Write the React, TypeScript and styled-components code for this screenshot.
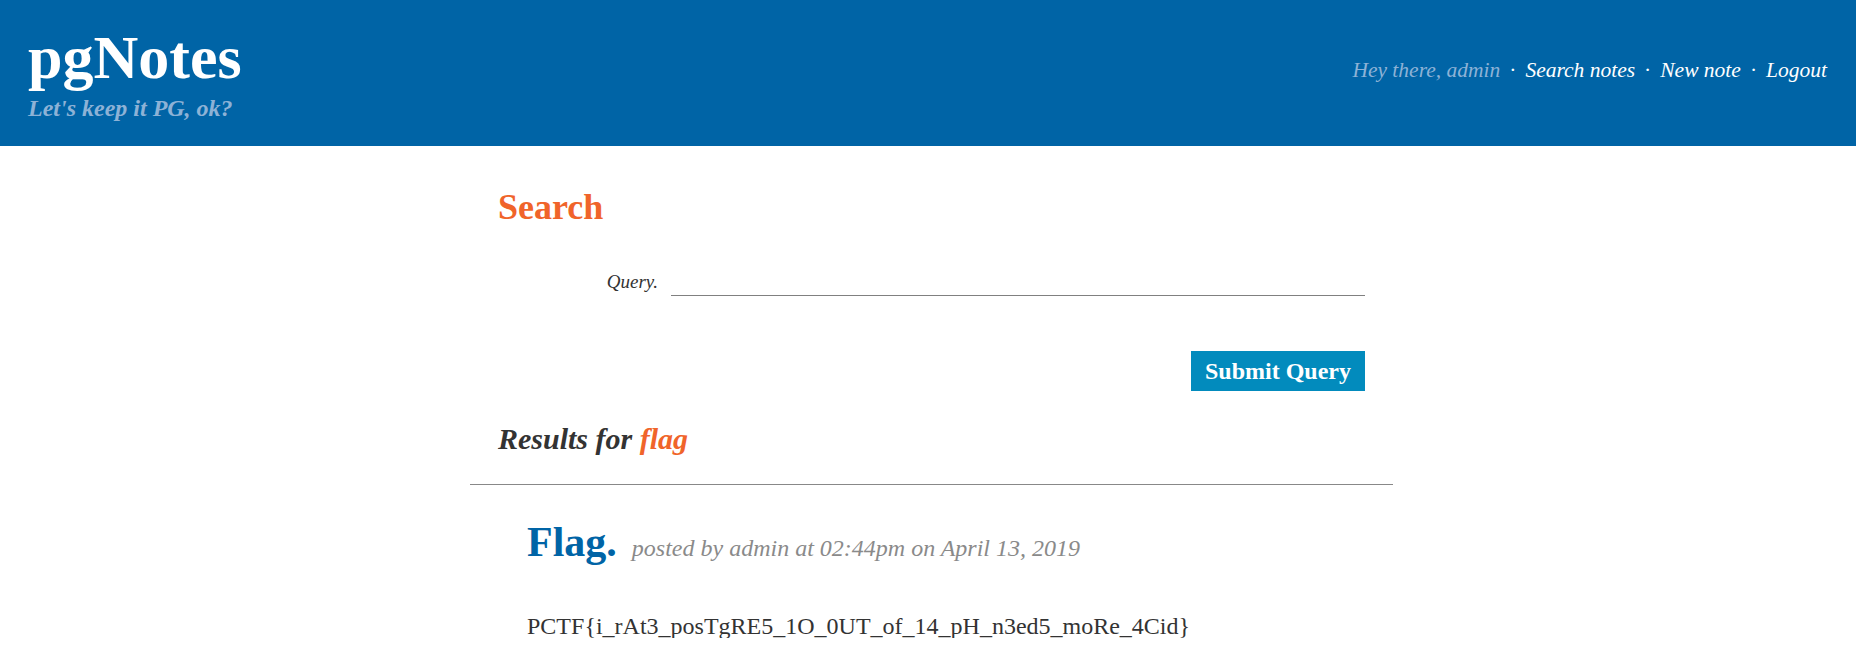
import styled, { createGlobalStyle } from 'styled-components'

const GlobalStyle = createGlobalStyle`
  html, body {
    margin: 0;
    padding: 0;
    background: #ffffff;
    font-family: "Liberation Serif", "Times New Roman", serif;
    color: #333333;
  }
`

const Header = styled.header({
  height: "146px",
  boxSizing: "border-box",
  background: "#0064a6",
  padding: "26px 29px 0 28px",
  display: "flex",
  justifyContent: "space-between",
  alignItems: "flex-start",
})

const Brand = styled.div({
  display: "flex",
  flexDirection: "column",
})

const Title = styled.h1({
  margin: 0,
  fontSize: "62px",
  lineHeight: 1,
  fontWeight: 700,
  color: "#ffffff",
})

const Tagline = styled.div({
  marginTop: "8px",
  fontSize: "24px",
  lineHeight: 1,
  fontWeight: 700,
  fontStyle: "italic",
  color: "#8db2d6",
})

const Nav = styled.nav({
  paddingTop: "34px",
  display: "flex",
  alignItems: "baseline",
  gap: "9px",
  fontSize: "21.5px",
  lineHeight: 1,
  fontStyle: "italic",
})

const Greeting = styled.span({
  color: "#8db2d6",
})

const NavLink = styled.a({
  color: "#ffffff",
  textDecoration: "none",
  cursor: "pointer",
})

const Dot = styled.span({
  color: "#ffffff",
  fontStyle: "normal",
})

const Main = styled.main({
  width: "923px",
  marginLeft: "calc(50% - 458px)",
})

const SearchSection = styled.section({
  padding: "0 28px",
  display: "flex",
  flexDirection: "column",
})

const Heading = styled.h2({
  margin: "43px 0 0",
  fontSize: "36px",
  lineHeight: 1,
  fontWeight: 700,
  color: "#f0642a",
})

const Form = styled.form({
  display: "flex",
  flexDirection: "column",
})

const Field = styled.div({
  marginTop: "43px",
  display: "grid",
  gridTemplateColumns: "160px 1fr",
  columnGap: "13px",
  alignItems: "end",
})

const Label = styled.label({
  textAlign: "right",
  fontSize: "19px",
  lineHeight: 1,
  fontStyle: "italic",
  color: "#333333",
  marginBottom: "5px",
})

const Input = styled.input({
  height: "28px",
  boxSizing: "border-box",
  border: "none",
  borderBottom: "1px solid #808080",
  outline: "none",
  background: "transparent",
  fontFamily: "inherit",
  fontSize: "20px",
})

const Submit = styled.button({
  alignSelf: "flex-end",
  marginTop: "55px",
  height: "40px",
  padding: "0 14px",
  border: "none",
  background: "#028bbd",
  color: "#ffffff",
  fontFamily: "inherit",
  fontSize: "24px",
  fontWeight: 700,
  lineHeight: 1,
  cursor: "pointer",
})

const Results = styled.h3({
  margin: "33px 0 0",
  fontSize: "30px",
  lineHeight: 1,
  fontWeight: 700,
  fontStyle: "italic",
  color: "#333333",
})

const Term = styled.span({
  color: "#f0642a",
})

const Divider = styled.hr({
  margin: "30px 0 0",
  border: "none",
  borderTop: "1px solid #888888",
})

const Post = styled.article({
  padding: "0 57px",
})

const PostHead = styled.div({
  marginTop: "36px",
  display: "flex",
  alignItems: "baseline",
  gap: "15px",
})

const PostTitle = styled.h4({
  margin: 0,
  fontSize: "42px",
  lineHeight: 1,
  fontWeight: 700,
  color: "#0064a6",
})

const Meta = styled.span({
  fontSize: "24px",
  fontStyle: "italic",
  color: "#8a8a8a",
})

const Body = styled.p({
  margin: "51px 0 0",
  fontSize: "24px",
  lineHeight: 1,
  color: "#333333",
})

const App = () => {
  return (
    <>
      <GlobalStyle />
      <Header>
        <Brand>
          <Title>pgNotes</Title>
          <Tagline>Let's keep it PG, ok?</Tagline>
        </Brand>
        <Nav>
          <Greeting>Hey there, admin</Greeting>
          <Dot>·</Dot>
          <NavLink>Search notes</NavLink>
          <Dot>·</Dot>
          <NavLink>New note</NavLink>
          <Dot>·</Dot>
          <NavLink>Logout</NavLink>
        </Nav>
      </Header>

      <Main>
        <SearchSection>
          <Heading>Search</Heading>
          <Form onSubmit={e => e.preventDefault()}>
            <Field>
              <Label htmlFor="q">Query.</Label>
              <Input id="q" name="q" />
            </Field>
            <Submit type="submit">Submit Query</Submit>
          </Form>
          <Results>Results for <Term>flag</Term></Results>
        </SearchSection>

        <Divider />

        <Post>
          <PostHead>
            <PostTitle>Flag.</PostTitle>
            <Meta>posted by admin at 02:44pm on April 13, 2019</Meta>
          </PostHead>
          <Body>PCTF{'{'}i_rAt3_posTgRE5_1O_0UT_of_14_pH_n3ed5_moRe_4Cid{'}'}</Body>
        </Post>
      </Main>
    </>
  )
}

export default App
